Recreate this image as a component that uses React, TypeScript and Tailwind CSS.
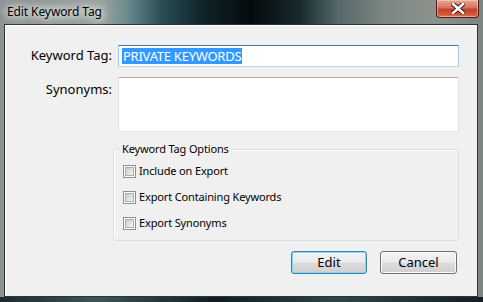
import React from "react";

const font = { fontFamily: '"Noto Sans", "Open Sans", sans-serif' };

function CloseGlyph() {
  return (
    <svg width="14" height="11" viewBox="0 0 14 11">
      <path
        d="M2 1 L12 10 M12 1 L2 10"
        stroke="#3b1a14"
        strokeWidth="4.6"
        strokeLinecap="square"
      />
      <path
        d="M2 1 L12 10 M12 1 L2 10"
        stroke="#ffffff"
        strokeWidth="2.6"
        strokeLinecap="square"
      />
    </svg>
  );
}

function Check({ label }: { label: string }) {
  return (
    <label className="flex h-[16px] items-center gap-[3px]">
      <span className="flex h-[13px] w-[13px] shrink-0 items-center justify-center border border-[#8f8f8f] bg-white">
        <span className="h-[9px] w-[9px] border border-[#adadad] bg-[linear-gradient(135deg,#cbcbcb,#f4f4f4)]" />
      </span>
      <span className="text-[11px] tracking-[-0.15px] text-black">{label}</span>
    </label>
  );
}

export default function App() {
  return (
    <div
      style={font}
      className="flex h-[302px] w-[483px] flex-col overflow-hidden bg-[linear-gradient(90deg,#8b9393_0%,#9aa19f_21%,#6f8e92_26%,#2c5158_33%,#0f2329_42%,#040b0e_52%,#16292d_62%,#55686a_70%,#7d8782_80%,#8c928c_90%,#7c8581_100%)]"
    >
      {/* title bar */}
      <div className="relative flex h-[24px] shrink-0 items-center pl-[7px]">
        <span className="text-[12px] tracking-[-0.1px] text-black [text-shadow:0_0_6px_#fff,0_0_10px_#fff,0_0_14px_rgba(255,255,255,0.8)]">
          Edit Keyword Tag
        </span>
        <div className="absolute right-[4px] top-0 flex h-[18px] w-[43px] items-center justify-center rounded-b-[4px] border border-t-0 border-[#4a1d14] bg-[linear-gradient(180deg,#e9a996_0%,#d9735c_45%,#c2412a_55%,#cf5a3a_85%,#e07a55_100%)] shadow-[inset_0_0_0_1px_rgba(255,220,210,0.5)]">
          <CloseGlyph />
        </div>
      </div>

      {/* client area */}
      <div className="ml-[4px] h-[273px] w-[474px] shrink-0 border border-[#2f3434] bg-[#f0f0f0] shadow-[inset_1px_1px_0_#ffffff]">
        <div className="flex flex-col pt-[20px]">
          <div className="flex items-center">
            <span className="w-[107px] text-right text-[13px] text-black">Keyword Tag:</span>
            <div className="ml-[6px] flex h-[22px] w-[341px] items-center border border-[#3d7bad] border-x-[#a4c9e3] border-b-[#b7d9ed] bg-white pl-[3px]">
              <span className="bg-[#3399ff] px-[1px] text-[13px] leading-[16px] tracking-[-0.25px] text-white">PRIVATE KEYWORDS</span>
            </div>
          </div>

          <div className="mt-[10px] flex items-start">
            <span className="w-[107px] pt-[3px] text-right text-[13px] text-black">Synonyms:</span>
            <div className="ml-[6px] h-[55px] w-[341px] border border-[#abadb3] border-x-[#e2e3ea] border-b-[#e3e9ef] bg-white" />
          </div>

          <fieldset className="ml-[108px] mt-[9px] w-[346px] rounded-[3px] border border-[#d5dfe5] pb-[9px] pl-[9px] shadow-[inset_1px_1px_0_#fff]">
            <legend className="-ml-[3px] px-[2px] text-[11px] leading-[16px] tracking-[-0.15px] text-black">Keyword Tag Options</legend>
            <div className="flex flex-col gap-[10px] pt-[6px]">
              <Check label="Include on Export" />
              <Check label="Export Containing Keywords" />
              <Check label="Export Synonyms" />
            </div>
          </fieldset>

          <div className="mt-[10px] flex justify-end gap-[13px] pr-[20px]">
            <button className="h-[23px] w-[76px] rounded-[3px] border border-[#3c7fb1] bg-[linear-gradient(180deg,#f2f2f2_0%,#ebebeb_48%,#dddddd_52%,#cfcfcf_100%)] text-[13px] text-black shadow-[inset_0_0_0_1px_#7fdcf9]">
              Edit
            </button>
            <button className="h-[23px] w-[77px] rounded-[3px] border border-[#707070] bg-[linear-gradient(180deg,#f2f2f2_0%,#ebebeb_48%,#dddddd_52%,#cfcfcf_100%)] text-[13px] text-black shadow-[inset_0_0_0_1px_#fcfcfc]">
              Cancel
            </button>
          </div>
        </div>
      </div>
      <div className="h-[5px] bg-[linear-gradient(90deg,#1d2a2c,#3d5556_20%,#101c20_45%,#2e4548_70%,#151e20_100%)]" />
    </div>
  );
}
